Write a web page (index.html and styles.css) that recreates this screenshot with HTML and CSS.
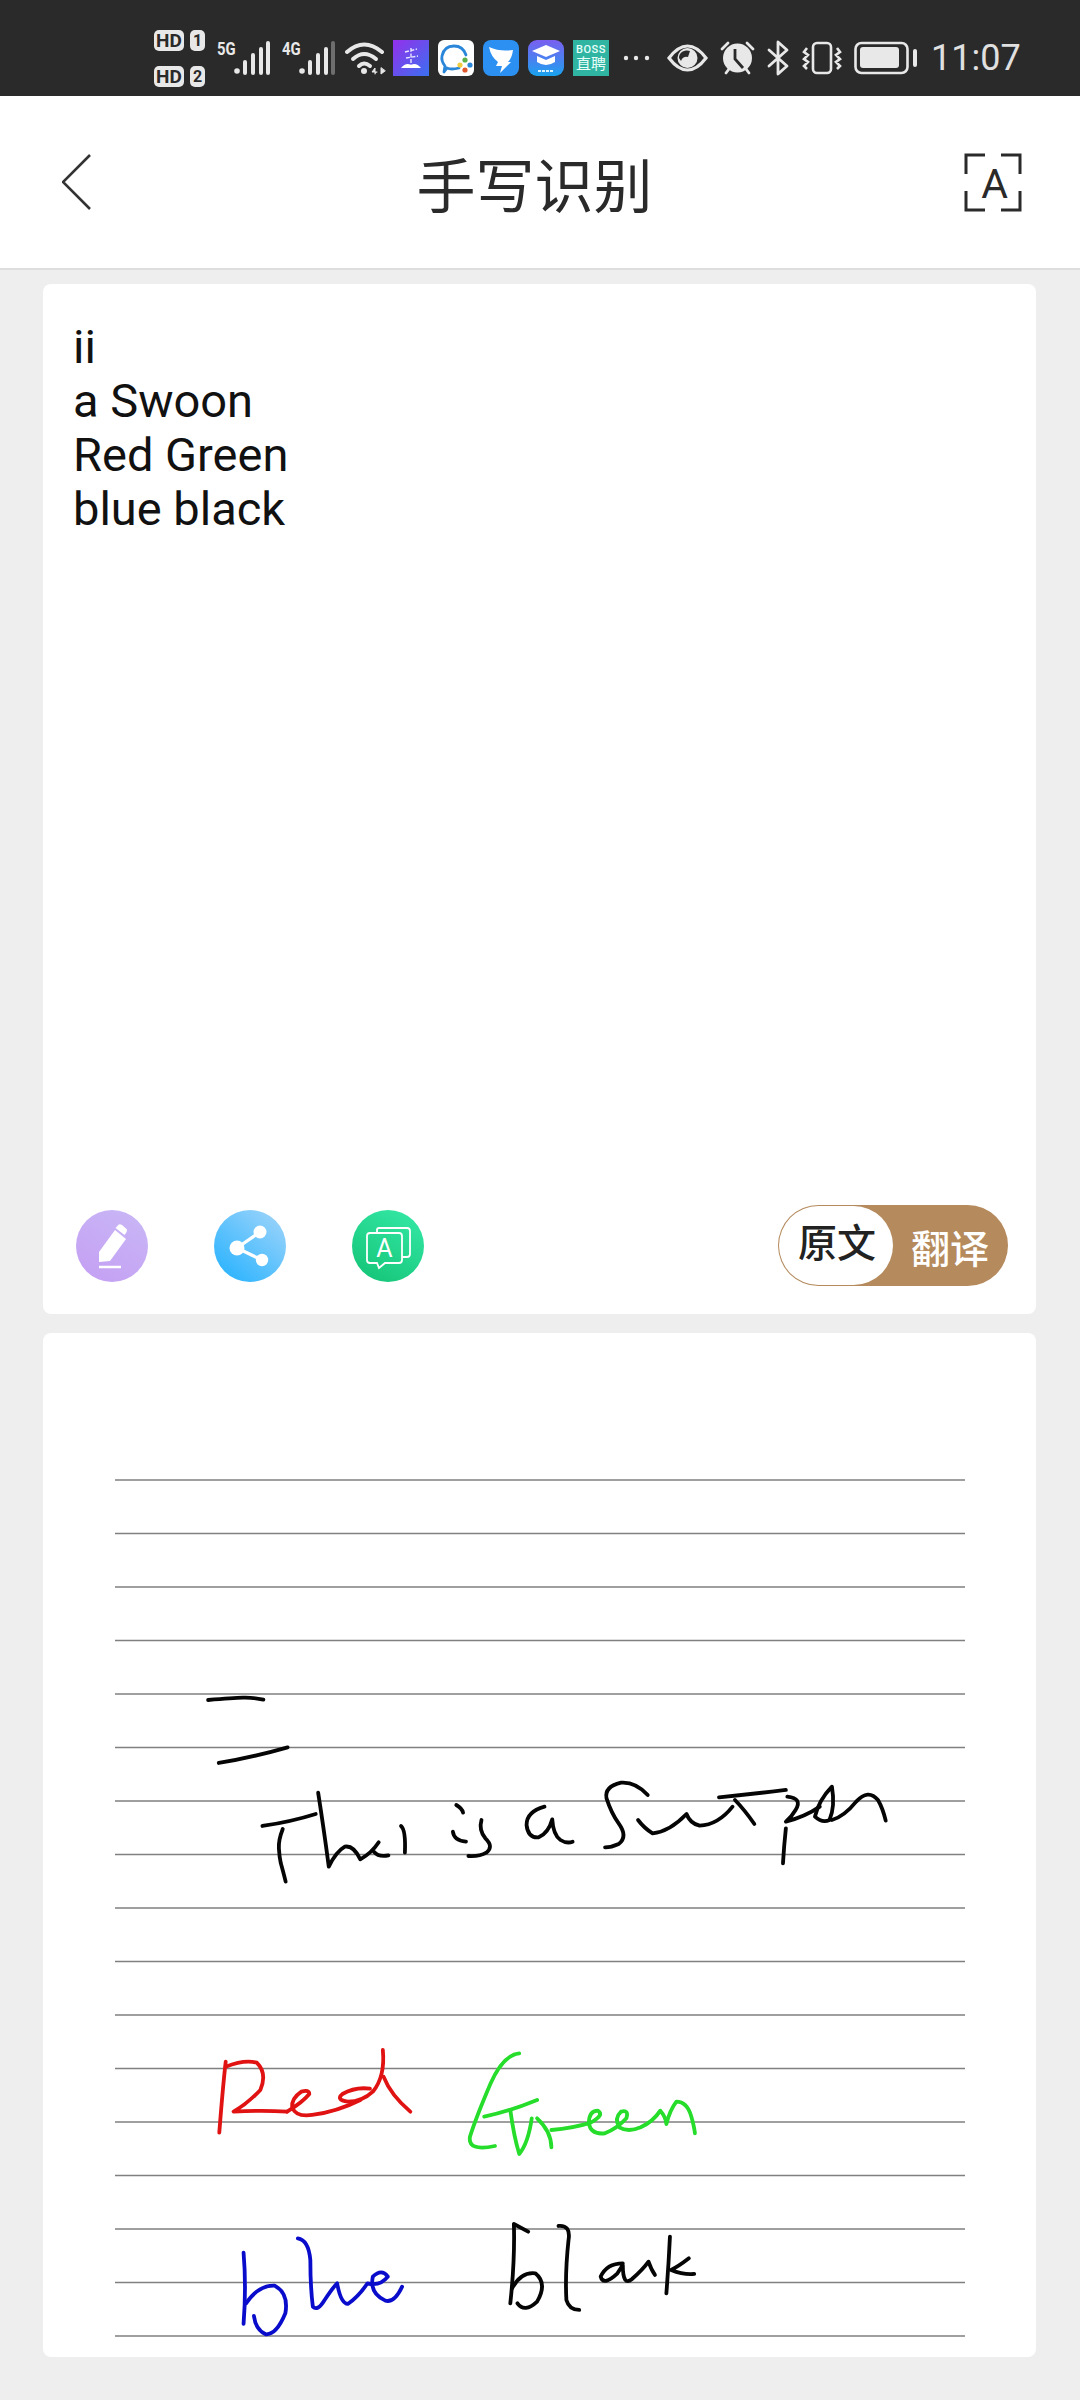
FILE: index.html
```html
<!DOCTYPE html>
<html lang="zh-CN">
<head>
    <meta charset="UTF-8">
    <title>手写识别</title>
    <link rel="stylesheet" href="styles.css">
</head>
<body>
<div class="status">
    <div class="sim">
        <div class="sim-row"><span class="hd">HD</span><span class="slot">1</span></div>
        <div class="sim-row"><span class="hd">HD</span><span class="slot">2</span></div>
    </div>
    <div class="net">
        <span class="net-label">5G</span>
        <svg width="36" height="34" viewBox="0 0 36 34"><circle cx="3" cy="30" r="2.8" fill="#e8e8e8"/><path d="M11 32V21M19 32V14M27 32V8M34 32V2" stroke="#e8e8e8" stroke-width="4" stroke-linecap="round"/></svg>
    </div>
    <div class="net">
        <span class="net-label">4G</span>
        <svg width="36" height="34" viewBox="0 0 36 34"><circle cx="3" cy="30" r="2.8" fill="#e8e8e8"/><path d="M11 32V21M19 32V14M27 32V8" stroke="#e8e8e8" stroke-width="4" stroke-linecap="round"/><path d="M34 32V2" stroke="#6e6e6e" stroke-width="4" stroke-linecap="round"/></svg>
    </div>
    <svg class="wifi" width="42" height="34" viewBox="0 0 42 34" fill="none" stroke="#e8e8e8" stroke-linecap="round">
        <path d="M2 11Q19-4 37 11" stroke-width="4"/>
        <path d="M8 18Q19 8 31 18" stroke-width="4"/>
        <path d="M14 25Q19 20 25 25" stroke-width="4"/>
        <circle cx="19" cy="30" r="3" fill="#e8e8e8" stroke="none"/>
        <path d="M30 33V27L27 31H32M36 27V33L40 30Z" fill="#e8e8e8" stroke="#e8e8e8" stroke-width="1"/>
    </svg>
    <div class="apps">
        <svg class="app" viewBox="0 0 36 36"><defs><linearGradient id="a1" x1="0" y1="0" x2="1" y2="1"><stop offset="0" stop-color="#9430ea"/><stop offset="1" stop-color="#3a70f0"/></linearGradient></defs><rect width="36" height="36" fill="url(#a1)"/><path d="M18 8V25M12 12L24 9M13 18L25 16" stroke="#e6e6ff" stroke-width="1.4" fill="none" stroke-dasharray="4 1.500"/><path d="M8 28Q13 22 18 25Q23 22 28 28Z" fill="#fff"/></svg>
        <svg class="app" viewBox="0 0 36 36"><rect width="36" height="36" rx="6" fill="#fff"/><path d="M21 28Q13 30 9 28L6 32L7 26Q3 21 4 16Q6 6 16 6Q25 6 28 15" fill="none" stroke="#2a86d8" stroke-width="2.800" stroke-linecap="round" stroke-linejoin="round"/><circle cx="27" cy="20" r="2.600" fill="#5bb04a"/><circle cx="32" cy="25" r="2.600" fill="#2a86d8"/><circle cx="27" cy="30" r="2.600" fill="#e0592c"/><circle cx="22" cy="25" r="2.600" fill="#f0cd40"/></svg>
        <svg class="app" viewBox="0 0 36 36"><rect width="36" height="36" rx="8" fill="#2c90f2"/><path d="M6 7Q17 12 30 10Q29 18 25 22L28 22L17 33L19 26L13 26L15 22Q8 17 6 7Z" fill="#fff"/></svg>
        <svg class="app" viewBox="0 0 36 36"><defs><linearGradient id="a4" x1="0" y1="0" x2="0" y2="1"><stop offset="0" stop-color="#7a5ff0"/><stop offset=".7" stop-color="#3a8cf0"/><stop offset="1" stop-color="#18a4ee"/></linearGradient></defs><rect width="36" height="36" rx="9" fill="url(#a4)"/><path d="M18 5L32 11L18 17L4 11Z" fill="#fff"/><path d="M9 16L18 20L27 16V22Q18 28 9 22Z" fill="#fff"/><path d="M10 31H26" stroke="#d8f2ff" stroke-width="2.200" stroke-dasharray="3 1"/></svg>
        <div class="app app-boss"><span class="boss-en">BOSS</span><span class="boss-cn">直聘</span></div>
    </div>
    <svg class="dots" width="27" height="6" viewBox="0 0 27 6" fill="#e8e8e8"><circle cx="3" cy="3" r="2.200"/><circle cx="13" cy="3" r="2.200"/><circle cx="24" cy="3" r="2.200"/></svg>
    <svg class="eye" width="41" height="28" viewBox="0 0 41 28"><path d="M2 14Q11 2 20.500 2Q30 2 39 14Q30 26 20.500 26Q11 26 2 14Z" fill="none" stroke="#e8e8e8" stroke-width="3.200"/><circle cx="20.500" cy="14" r="10" fill="#e8e8e8"/><path d="M12 14A8 7 0 0 1 23 7L21 13Q16 12 14 17Z" fill="#2a2a2a"/></svg>
    <svg width="35" height="34" viewBox="0 0 35 34"><path d="M2 8L8 2M33 8L27 2M6 32L9 28M29 32L26 28" stroke="#e8e8e8" stroke-width="2.800" stroke-linecap="round"/><circle cx="17.500" cy="17" r="14.500" fill="#e8e8e8"/><path d="M15 8V18L23 27" fill="none" stroke="#2a2a2a" stroke-width="2.800"/></svg>
    <svg width="23" height="36" viewBox="0 0 23 36" fill="none" stroke="#e8e8e8" stroke-width="2.800" stroke-linejoin="round" stroke-linecap="round"><path d="M2 10L20 26L11 34V2L20 10L2 26"/></svg>
    <svg width="40" height="34" viewBox="0 0 40 34" fill="none" stroke="#e8e8e8" stroke-width="2.600"><rect x="11" y="2" width="18" height="30" rx="4"/><path d="M5 7L2 11L6 14L2 18L6 21L2 25L5 28M35 7L38 11L34 14L38 18L34 21L38 25L35 28"/></svg>
    <svg width="64" height="34" viewBox="0 0 64 34"><rect x="1.500" y="2" width="52" height="30" rx="6" fill="none" stroke="#e8e8e8" stroke-width="2.600"/><rect x="6" y="6" width="39" height="21" rx="3" fill="#e8e8e8"/><rect x="59" y="8" width="4" height="18" rx="2" fill="#e8e8e8"/></svg>
    <span class="time">11:07</span>
</div>

<div class="header">
    <svg class="back" width="44" height="58" viewBox="0 0 44 58"><path d="M28 2L1 29L28 56" fill="none" stroke="#333" stroke-width="2.600"/></svg>
    <h1 class="title">手写识别</h1>
    <svg class="scan" width="60" height="60" viewBox="0 0 60 60">
        <path d="M22 3H3V22M38 3H57V22M22 58H3V39M38 58H57V39" fill="none" stroke="#2a2a2a" stroke-width="3"/>
        <text x="31.500" y="46" text-anchor="middle" class="scan-a">A</text>
    </svg>
</div>

<div class="content">
    <div class="card result">
        <div class="result-text">
            <div>ii</div>
            <div>a Swoon</div>
            <div>Red Green</div>
            <div>blue black</div>
        </div>
        <div class="tools">
            <div class="tool tool-edit">
                <svg width="72" height="72" viewBox="0 0 72 72"><path d="M23 52V42L39 20L50 29L34 51Z" fill="#fff"/><path d="M41 16.500Q43 13 46 15L50 18.500Q52 20 50 23L48.500 25L39.500 18Z" fill="#fff"/><path d="M23 57H45" stroke="#fff" stroke-width="2.500"/></svg>
            </div>
            <div class="tool tool-share">
                <svg width="72" height="72" viewBox="0 0 72 72" fill="#fff"><path d="M46 22L23 38L48 50" fill="none" stroke="#fff" stroke-width="3.200"/><circle cx="46" cy="22" r="6.500"/><circle cx="23" cy="38" r="7.500"/><circle cx="48" cy="50" r="6.200"/></svg>
            </div>
            <div class="tool tool-lang">
                <svg width="72" height="72" viewBox="0 0 72 72" fill="none" stroke="#fff" stroke-width="1.800"><path d="M25 22V20Q25 18 27 18H55Q58 18 58 21V44Q58 47 55 47H50"/><path d="M18 23H47Q50 23 50 26V50Q50 53 47 53H33L27 58L25 53H18Q15 53 15 50V26Q15 23 18 23Z"/><text x="32.500" y="47" text-anchor="middle" class="lang-a">A</text></svg>
            </div>
            <div class="toggle">
                <span class="toggle-on">原文</span>
                <span class="toggle-off">翻译</span>
            </div>
        </div>
    </div>
    <div class="card paper">
        <svg class="sheet" width="993" height="1024" viewBox="43 1333 993 1024">
            <path class="rule" d="M115 1480H965M115 1533.500H965M115 1587H965M115 1640.500H965M115 1694H965M115 1747.500H965M115 1801H965M115 1854.500H965M115 1908H965M115 1961.500H965M115 2015H965M115 2068.500H965M115 2122H965M115 2175.500H965M115 2229H965M115 2282.500H965M115 2336H965"/>
            <g class="ink ink-black" transform="translate(180 1660) scale(.4847 .3333)">
                <path d="M58 120Q110 114 130 113Q150 112 172 119"/>
                <path d="M80 309Q150 292 222 262"/>
                <path d="M170 498Q230 485 280 462"/>
                <path d="M212 507Q203 540 204 565Q205 590 208 610Q212 630 218 665"/>
                <path d="M285 398Q296 500 307 620Q322 575 340 560Q358 555 372 598Q395 580 410 547"/>
                <path d="M400 575Q410 592 430 586"/>
                <path d="M456 498Q466 510 464 578"/>
                <path d="M570 435Q582 445 584 458"/>
                <path d="M563 515Q565 542 590 545"/>
                <path d="M622 480Q616 510 630 535Q648 560 632 578Q618 590 595 588"/>
                <path d="M752 440Q715 455 715 495Q718 535 740 532Q760 520 768 478Q770 525 785 540Q798 552 810 545"/>
                <path d="M965 405Q940 365 910 368Q875 380 880 415Q890 460 905 490Q925 530 905 552Q890 562 877 562"/>
                <path d="M945 480Q958 505 975 520Q1010 515 1045 462Q1052 490 1072 497Q1110 495 1140 440"/>
                <path d="M1112 412Q1180 402 1250 390"/>
                <path d="M1145 420Q1165 450 1185 492"/>
                <path d="M1253 410Q1285 415 1270 450Q1262 470 1250 485Q1290 470 1320 440"/>
                <path d="M1345 380Q1318 420 1310 470Q1325 490 1340 480Q1352 440 1345 380"/>
                <path d="M1345 480Q1370 470 1395 425Q1420 385 1440 420Q1450 445 1456 482"/>
                <path d="M1250 505Q1246 560 1244 610"/>
            </g>
            <g transform="translate(180 2020) scale(.3571 .3333)">
                <g class="ink ink-red">
                    <path d="M128 125Q120 200 110 338"/>
                    <path d="M128 140Q180 118 215 128Q245 160 225 210Q190 250 150 275Q230 270 300 275"/>
                    <path d="M300 275Q345 245 362 222Q362 208 340 215Q312 235 314 262Q325 292 370 285Q440 275 505 240"/>
                    <path d="M532 206Q490 200 455 222Q435 240 470 245Q510 245 540 215Q575 170 568 90"/>
                    <path d="M570 170Q590 225 645 275"/>
                </g>
                <g class="ink ink-green">
                    <path d="M950 100Q905 105 870 190Q830 290 812 350Q805 395 882 378"/>
                    <path d="M852 290Q920 275 1000 240"/>
                    <path d="M925 270Q935 350 950 402Q975 370 985 295"/>
                    <path d="M1040 382Q1040 335 1000 295"/>
                    <path d="M1040 330Q1100 325 1150 308Q1190 285 1170 272Q1145 272 1145 310Q1150 345 1190 340Q1225 325 1250 295Q1258 268 1235 275Q1215 295 1230 322Q1255 338 1290 322Q1325 305 1345 272Q1360 290 1362 312Q1372 270 1390 245Q1420 245 1432 290Q1440 320 1442 340"/>
                </g>
                <g class="ink ink-blue">
                    <path d="M178 698Q186 800 178 912"/>
                    <path d="M185 850Q220 795 265 797Q305 820 295 880Q270 945 240 943Q212 930 207 888"/>
                    <path d="M330 655Q360 660 365 720Q365 800 372 860Q385 875 405 840Q430 800 440 790Q450 850 470 852Q500 830 525 790Q560 800 582 770Q565 745 540 770Q530 820 575 842Q600 850 622 800"/>
                </g>
                <g class="ink ink-black">
                    <path d="M975 635L935 612Q938 720 925 850"/>
                    <path d="M930 805Q955 755 995 760Q1030 790 1000 845Q965 880 945 850"/>
                    <path d="M1060 618Q1095 615 1088 660Q1078 760 1082 840Q1090 870 1118 870"/>
                    <path d="M1240 730Q1195 730 1178 770Q1185 800 1225 760L1240 735Q1240 800 1265 778Q1295 750 1312 725Q1320 750 1330 765"/>
                    <path d="M1372 650Q1368 740 1362 820"/>
                    <path d="M1425 715Q1395 740 1375 750Q1410 765 1440 762"/>
                </g>
            </g>
        </svg>
    </div>
</div>
</body>
</html>
```
FILE: styles.css
```css
*{
    margin: 0;
    padding: 0;
    box-sizing: border-box;
}
body{
    width: 1080px;
    height: 2400px;
    background: #eeeeee;
    font-family: Roboto, "Noto Sans CJK SC", sans-serif;
    overflow: hidden;
}

/* status bar */
.status{
    height: 96px;
    padding: 20px 0 0 154px;
    background: #2a2a2a;
    display: flex;
    align-items: center;
    gap: 12px;
    color: #e8e8e8;
}
.sim{
    width: 51px;
    display: flex;
    flex-direction: column;
    gap: 15px;
}
.sim-row{
    display: flex;
    justify-content: space-between;
    height: 21px;
}
.hd,
.slot{
    background: #e8e8e8;
    color: #2a2a2a;
    font-size: 19px;
    font-weight: 700;
    line-height: 21px;
    text-align: center;
    border-radius: 5px;
}
.hd{
    width: 30px;
}
.slot{
    width: 15px;
    font-size: 16px;
}
.net{
    width: 53px;
    height: 34px;
    display: flex;
    justify-content: space-between;
}
.net-label{
    width: 17px;
    font-size: 19px;
    font-weight: 700;
    line-height: 15px;
    transform: scaleX(.78);
    transform-origin: left top;
}
.wifi{
    margin-left: -2px;
}
.apps{
    margin-left: -6px;
    display: flex;
    gap: 9px;
}
.app{
    width: 36px;
    height: 36px;
    display: block;
}
.app-boss{
    background: #2fb5a2;
    color: #e8fffa;
    display: flex;
    flex-direction: column;
    align-items: center;
    justify-content: center;
}
.boss-en{
    font-size: 11px;
    font-weight: 500;
    line-height: 13px;
    letter-spacing: .5px;
}
.boss-cn{
    font-size: 15px;
    line-height: 17px;
}
.dots{
    margin-left: 2px;
}
.eye{
    margin-left: 5px;
}
.time{
    margin-left: 1px;
    font-size: 36px;
    font-weight: 400;
    color: #e0e0e0;
}

/* title bar */
.header{
    height: 174px;
    padding: 0 57px 0 62px;
    background: #fff;
    border-bottom: 2px solid #dedede;
    display: flex;
    align-items: center;
}
.title{
    flex: 1;
    text-align: center;
    font-size: 59px;
    font-weight: 400;
    color: #2a2a2a;
}
.scan-a{
    font-family: Roboto, sans-serif;
    font-size: 41px;
    font-weight: 400;
    fill: #2a2a2a;
}

/* cards */
.content{
    padding: 14px 44px 0 43px;
    display: flex;
    flex-direction: column;
    gap: 19px;
}
.card{
    background: #fff;
    border-radius: 8px;
}
.result{
    height: 1030px;
    padding: 36px 28px 28px 30px;
    display: flex;
    flex-direction: column;
    justify-content: space-between;
}
.result-text{
    font-size: 47px;
    line-height: 54px;
    color: #111;
}
.tools{
    padding-left: 3px;
    display: flex;
    align-items: center;
    gap: 66px;
}
.tool{
    width: 72px;
    height: 72px;
    border-radius: 50%;
}
.tool svg{
    display: block;
}
.tool-edit{
    background: linear-gradient(30deg, #c49ef3, #c9b8f6);
}
.tool-share{
    background: linear-gradient(40deg, #1fb0ff, #a5d6fa);
}
.tool-lang{
    background: linear-gradient(30deg, #12c274, #36eaa8);
}
.lang-a{
    font-family: Roboto, sans-serif;
    font-size: 25px;
    font-weight: 400;
    fill: #fff;
    stroke: none;
}
.toggle{
    margin-left: auto;
    width: 230px;
    height: 81px;
    padding: 1px;
    border-radius: 41px;
    background: #b58a5c;
    display: flex;
    align-items: center;
    font-size: 39px;
    font-weight: 500;
}
.toggle-on{
    width: 114px;
    height: 79px;
    padding-left: 2px;
    border-radius: 40px;
    background: #fff;
    color: #222;
    line-height: 77px;
    text-align: center;
}
.toggle-off{
    flex: 1;
    color: #fff;
    text-align: center;
}

/* writing sheet */
.paper{
    height: 1024px;
}
.sheet{
    display: block;
}
.rule{
    fill: none;
    stroke: #808080;
    stroke-width: 1.6;
}
.ink path{
    fill: none;
    stroke-width: 3.8;
    stroke-linecap: round;
    stroke-linejoin: round;
    vector-effect: non-scaling-stroke;
}
.ink-black path{
    stroke: #050505;
}
.ink-red path{
    stroke: #e01212;
}
.ink-green path{
    stroke: #25dd2a;
}
.ink-blue path{
    stroke: #0a0ccc;
}
```
